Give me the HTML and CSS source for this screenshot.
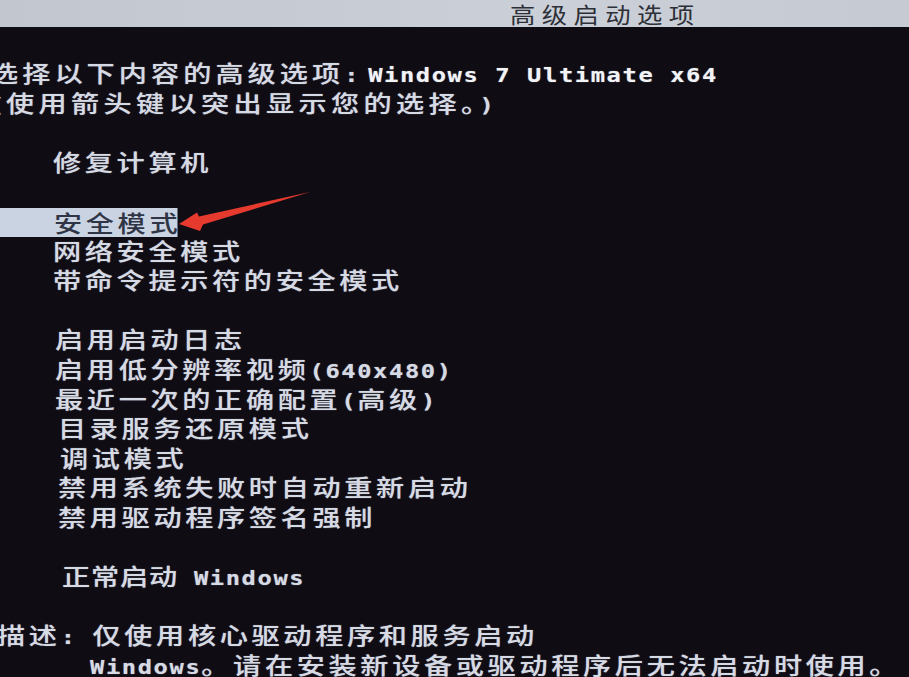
FILE: index.html
```html
<!DOCTYPE html>
<html>
  <head>
    <title>高级启动选项</title>
    <meta charset="utf-8" />
    <link rel="stylesheet" href="styles.css">
  </head>
  <body>
    <div class="bar">
      <span class="title">高级启动选项</span>
    </div>
    <div class="screen">
      <div class="row head">选择以下内容的高级选项<span class="lat colon">:</span><span class="lat os">Windows 7 Ultimate x64</span></div>
      <div class="row head wide"><span class="lat">(</span>使用箭头键以突出显示您的选择。<span class="lat">)</span></div>
      <div class="row"></div>
      <div class="row item">修复计算机</div>
      <div class="row"></div>
      <div class="row"><span class="sel">安全模式</span></div>
      <div class="row item">网络安全模式</div>
      <div class="row item">带命令提示符的安全模式</div>
      <div class="row"></div>
      <div class="row item mid">启用启动日志</div>
      <div class="row item mid">启用低分辨率视频<span class="lat">(640x480)</span></div>
      <div class="row item mid">最近一次的正确配置<span class="lat">(</span>高级<span class="lat">)</span></div>
      <div class="row item low">目录服务还原模式</div>
      <div class="row item lower">调试模式</div>
      <div class="row item low">禁用系统失败时自动重新启动</div>
      <div class="row item low">禁用驱动程序签名强制</div>
      <div class="row"></div>
      <div class="row item start">正常启动<span class="lat"> Windows</span></div>
      <div class="row"></div>
      <div class="row desc">描述<span class="lat">: </span>仅使用核心驱动程序和服务启动</div>
      <div class="row desc-more"><span class="lat">Windows</span>。请在安装新设备或驱动程序后无法启动时使用。</div>

      <!-- red arrow pointing at the selected entry -->
      <svg class="arrow" width="140" height="48" viewBox="175 188 140 48">
        <polygon points="179,224 197,212.5 199,216.5 310,192 203,224.5 200,231" fill="#e63a2f" />
      </svg>
    </div>
  </body>
</html>
```

FILE: styles.css
```css
body {
  margin: 0;
  padding: 0;
  background: #0f0d13;
  color: #d6dae4;
  font-family: "Noto Sans CJK SC", sans-serif;
  width: 909px;
  height: 677px;
  overflow: hidden;
}
.bar {
  height: 27px;
  background: linear-gradient(90deg, #c2c6ce, #cbcfd7 60%, #c6cad2);
  padding-left: 510px;
  overflow: hidden;
}
.title {
  display: inline-block;
  font-size: 22px;
  line-height: 27px;
  letter-spacing: 5.6px;
  color: #2d3037;
  transform: scaleX(1.15); /* the boot font is wider than tall */
  transform-origin: 0 0;
}
.screen {
  position: relative; /* arrow overlay */
  padding-top: 31px;
  overflow: hidden;
}
/* rows are drawn narrow then stretched 1.25x, so all x values below are /1.25 */
.row {
  width: 727px;
  height: 29.6px;
  line-height: 29.6px;
  font-size: 22.5px;
  font-weight: 500;
  letter-spacing: 2.95px;
  white-space: nowrap;
  text-shadow: 0 0 1px rgba(214, 218, 228, 0.6);
  transform: scaleX(1.25);
  transform-origin: 0 0;
}
.lat {
  font-family: "DejaVu Sans Mono", monospace;
  font-size: 19px;
  font-weight: bold;
  letter-spacing: 1.28px;
  white-space: pre;
}
.colon {
  margin-right: 6.4px;
}
.os {
  color: #f1f3f6;
}
.head {
  margin-left: -10.4px;
  letter-spacing: 3.26px;
}
.head.wide {
  letter-spacing: 3.5px;
}
.item {
  padding-left: 42.4px;
}
.item.mid {
  padding-left: 44px;
}
.item.low {
  padding-left: 46.4px;
}
.item.lower {
  padding-left: 48px;
}
.item.start {
  padding-left: 49.6px;
  letter-spacing: 0.7px;
}
.desc {
  margin-left: -3.2px;
}
.desc-more {
  padding-left: 72px;
}
.sel {
  display: inline-block;
  box-sizing: border-box;
  width: 141.6px;
  height: 29px;
  line-height: 28px;
  margin-top: 2px;
  padding-left: 43.2px;
  overflow: hidden;
  background: #c9d3e2;
  color: #2f3545;
  text-shadow: none;
  vertical-align: top;
}
.arrow {
  position: absolute;
  left: 175px;
  top: 161px;
}
```
